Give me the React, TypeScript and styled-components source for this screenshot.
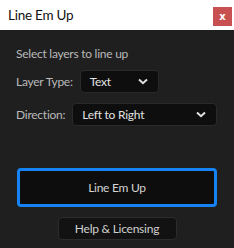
import React from 'react';
import styled, { createGlobalStyle } from 'styled-components';

const GlobalStyle = createGlobalStyle`
  html, body {
    margin: 0;
    padding: 0;
    background: #1f1f1f;
  }
  * {
    box-sizing: border-box;
  }
`;

const Window = styled.div`
  width: 234px;
  height: 248px;
  display: flex;
  flex-direction: column;
  background: #1f1f1f;
  font-family: Lato, 'Noto Sans', sans-serif;
  letter-spacing: -0.25px;
`;

const TitleBar = styled.div`
  height: 30px;
  flex: none;
  display: flex;
  align-items: center;
  justify-content: space-between;
  padding: 0 2px 0 8px;
  background: #ffffff;
`;

const Title = styled.span`
  font-size: 13.5px;
  color: #111111;
`;

const CloseButton = styled.div`
  width: 19px;
  height: 19px;
  margin-top: 2px;
  display: flex;
  align-items: center;
  justify-content: center;
  background: #c85050;
  color: #ffffff;
  font-size: 10px;
  font-weight: 700;
  font-family: 'DejaVu Sans', sans-serif;
  letter-spacing: 0;
`;

const Panel = styled.div`
  flex: 1;
  display: flex;
  flex-direction: column;
  padding: 17px 16px 0 16px;
  color: #b9b9b9;
  font-size: 12px;
`;

const Heading = styled.div`
  line-height: 14px;
  margin-bottom: 9px;
`;

const Row = styled.div`
  display: flex;
  align-items: center;
  gap: 7px;
  margin-bottom: 10px;
`;

const Label = styled.span`
  color: #b9b9b9;
`;

const Dropdown = styled.div<{ $width: number }>`
  width: ${(p) => p.$width}px;
  height: 23px;
  display: flex;
  align-items: center;
  justify-content: space-between;
  padding: 0 10px 0 9px;
  background: #0e0e0e;
  border: 1px solid #2a2a2a;
  border-radius: 4px;
  color: #e2e2e2;
  font-size: 12px;
`;

const Actions = styled.div`
  display: flex;
  flex-direction: column;
  align-items: center;
  margin-top: 32px;
  gap: 10px;
`;

const PrimaryButton = styled.button`
  width: 200px;
  height: 39px;
  background: #0d0d0d;
  border: 3px solid #1683f5;
  border-radius: 4px;
  color: #d4d4d4;
  font-family: inherit;
  letter-spacing: inherit;
  font-size: 12px;
`;

const SecondaryButton = styled.button`
  width: 119px;
  height: 23px;
  background: #121212;
  border: 1px solid #2c2c2c;
  border-radius: 4px;
  color: #d0d0d0;
  font-family: inherit;
  letter-spacing: inherit;
  font-size: 12px;
  padding: 0;
`;

const Chevron = () => (
  <svg width="10" height="7" viewBox="0 0 10 7">
    <path d="M1 1.5 L5 5.2 L9 1.5" fill="none" stroke="#e0e0e0" strokeWidth="2" />
  </svg>
);

export default function App() {
  return (
    <>
      <GlobalStyle />
      <Window>
        <TitleBar>
          <Title>Line Em Up</Title>
          <CloseButton>x</CloseButton>
        </TitleBar>
        <Panel>
          <Heading>Select layers to line up</Heading>
          <Row>
            <Label>Layer Type:</Label>
            <Dropdown $width={79}>
              <span>Text</span>
              <Chevron />
            </Dropdown>
          </Row>
          <Row>
            <Label>Direction:</Label>
            <Dropdown $width={145}>
              <span>Left to Right</span>
              <Chevron />
            </Dropdown>
          </Row>
          <Actions>
            <PrimaryButton>Line Em Up</PrimaryButton>
            <SecondaryButton>Help &amp; Licensing</SecondaryButton>
          </Actions>
        </Panel>
      </Window>
    </>
  );
}
